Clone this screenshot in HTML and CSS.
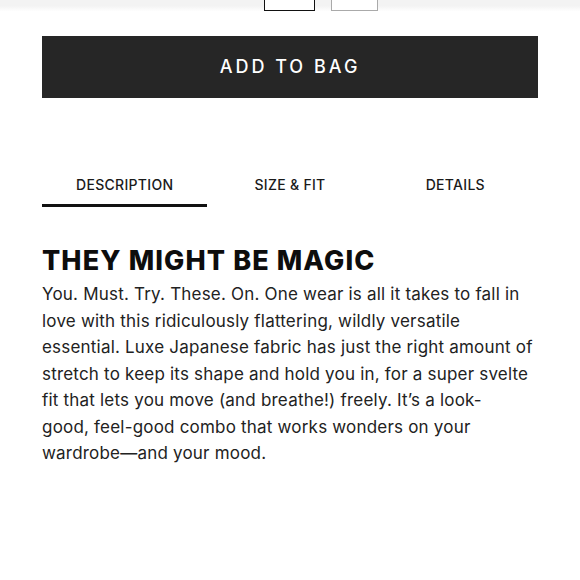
FILE: index.html
```html
<!DOCTYPE html>
<html>
<head>
<meta charset="utf-8">
<link rel="stylesheet" href="styles.css">
</head>
<body>
<div class="top">
  <div class="sizes">
    <span class="size selected"></span>
    <span class="size"></span>
  </div>
</div>
<main class="page">
  <button class="bag">ADD TO BAG</button>
  <nav class="tabs">
    <div class="tab active">DESCRIPTION</div>
    <div class="tab">SIZE &amp; FIT</div>
    <div class="tab">DETAILS</div>
  </nav>
  <h1 class="title">THEY MIGHT BE MAGIC</h1>
  <p class="desc">You. Must. Try. These. On. One wear is all it takes to fall in love with this ridiculously flattering, wildly versatile essential. Luxe Japanese fabric has just the right amount of stretch to keep its shape and hold you in, for a super svelte fit that lets you move (and breathe!) freely. It’s a look-<br>good, feel-good combo that works wonders on your wardrobe—and your mood.</p>
</main>
</body>
</html>
```
FILE: styles.css
```css
html, body {
  margin: 0;
  padding: 0;
  background: #fff;
  font-family: Inter, "Noto Sans", sans-serif;
  color: #1e1e1e;
}
.top {
  height: 11px;
  background: linear-gradient(#f3f3f3 0, #f3f3f3 6px, #fafafa 9px, #fff 12px);
  position: relative;
}
.sizes {
  display: flex;
  gap: 16px;
  padding-left: 264px;
  height: 11px;
}
.size {
  display: block;
  box-sizing: border-box;
  width: 47px;
  height: 11px;
  border: 1px solid #aaa;
  border-top: none;
  background: #fff;
}
.size.selected {
  width: 51px;
  border: 1.5px solid #111;
  border-top: none;
}
.page {
  padding: 0 42px;
}
.bag {
  display: block;
  width: 100%;
  height: 62px;
  margin-top: 25px;
  border: none;
  background: #262626;
  color: #fff;
  font-family: Inter, "Noto Sans", sans-serif;
  font-size: 18px;
  font-weight: 500;
  letter-spacing: 3px;
  padding: 0 0 2px;
}
.tabs {
  display: grid;
  grid-template-columns: 1fr 1fr 1fr;
  margin-top: 63px;
}
.tab {
  text-align: center;
  font-size: 14px;
  font-weight: 500;
  letter-spacing: 0.3px;
  line-height: 17px;
  padding: 15px 0 11px;
  border-bottom: 3px solid transparent;
  color: #1a1a1a;
}
.tab.active {
  border-bottom-color: #111;
}
.title {
  margin: 38px 0 0;
  font-size: 27px;
  font-weight: 800;
  line-height: 32px;
  letter-spacing: 1.1px;
  color: #0d0d0d;
}
.desc {
  margin: 4px 0 0;
  font-size: 17px;
  line-height: 26.5px;
  letter-spacing: 0.2px;
  color: #222;
}
```
